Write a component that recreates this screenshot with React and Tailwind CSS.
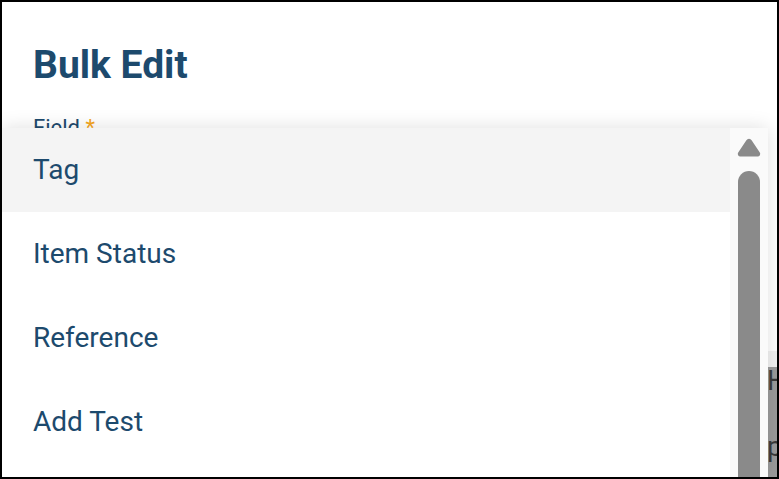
import { useState } from 'react';

const OPTIONS = ['Tag', 'Item Status', 'Reference', 'Add Test'];

function ScrollUpArrow() {
  return (
    <svg width="26" height="20" viewBox="0 0 26 20">
      <path d="M10.4 3.2a3 3 0 0 1 5.2 0l8.2 12.3A2.6 2.6 0 0 1 21.6 19.5H4.4a2.6 2.6 0 0 1-2.2-4z" fill="#8a8a8a" />
    </svg>
  );
}

export default function App() {
  const [active] = useState('Tag');

  return (
    <div
      className="relative w-[779px] h-[479px] overflow-hidden bg-white border-2 border-black"
      style={{ fontFamily: 'Roboto, "Noto Sans", sans-serif' }}
    >
      <div className="pl-[31px] pr-8 pt-[37px]">
        <h1 className="m-0 text-[39px] font-bold leading-[52px] text-[#1d4a6d]">Bulk Edit</h1>
        <div className="mt-[23px] text-[22px] leading-7 text-[#1d4a6d]">
          Field <span className="text-[#f5a623]">*</span>
        </div>
        <div className="mt-2 h-12 rounded border border-[#cfd8e3]" />
        <div className="mt-[153px] flex justify-end -mr-8">
          <div className="w-[120px] h-[16px] bg-[#f2f2f2]" />
        </div>
        <div className="flex justify-end -mr-8">
          <div className="w-[120px] h-[120px] bg-[#9b9b9b] text-[#3a3a3a] text-[28px] leading-[36px] pl-[110px]">
            <div className="mt-[-4px]">H</div>
            <div className="mt-[30px]">p</div>
          </div>
        </div>
      </div>

      {/* dropdown list */}
      <div className="absolute top-[126px] left-0 right-[9px] bottom-0 flex bg-white shadow-[0_0_18px_rgba(0,0,0,0.13)]">
        <ul className="m-0 p-0 list-none flex-1">
          {OPTIONS.map((o) => (
            <li
              key={o}
              className={`h-[84px] flex items-center pl-[31px] text-[28px] text-[#1d4a6d] ${o === active ? 'bg-[#f4f4f4]' : ''}`}
            >
              {o}
            </li>
          ))}
        </ul>
        <div className="w-[38px] flex-none bg-[#fafafa] flex flex-col items-center pt-[9px]">
          <ScrollUpArrow />
          <div className="mt-[14px] w-[22px] flex-1 rounded-t-full bg-[#8a8a8a]" />
        </div>
      </div>
    </div>
  );
}
